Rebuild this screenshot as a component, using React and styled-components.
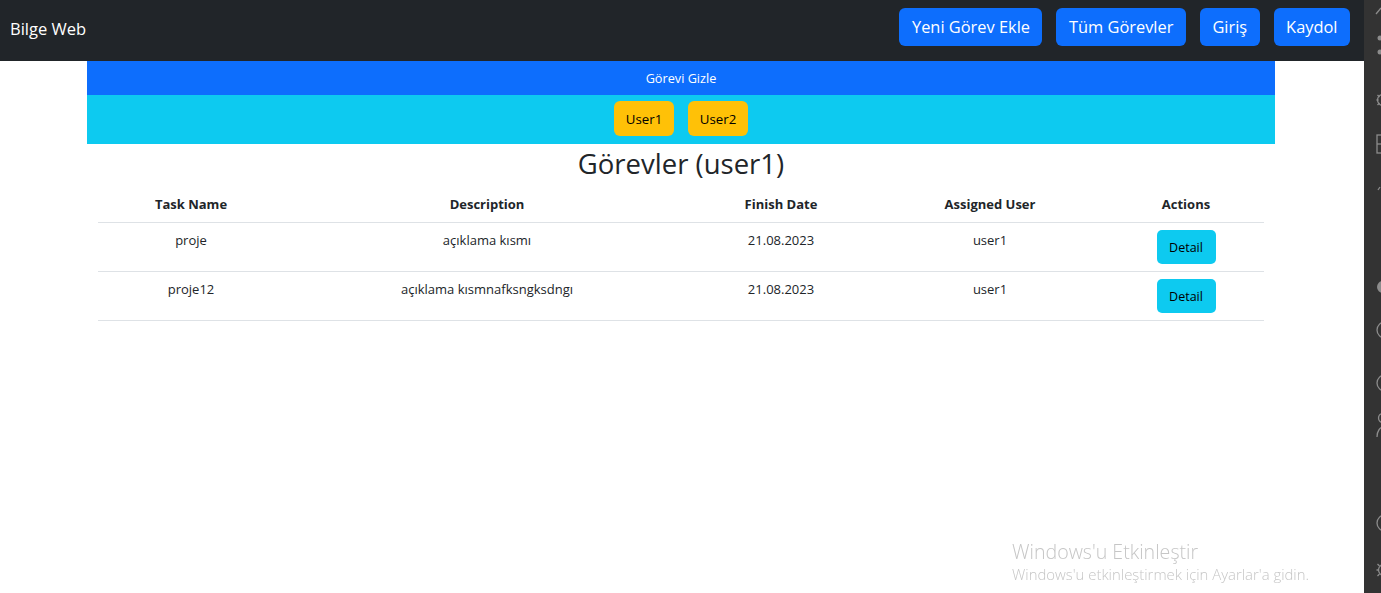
import React, { useState } from "react";
import styled, { createGlobalStyle } from "styled-components";

const GlobalStyle = createGlobalStyle`
  html, body {
    margin: 0;
    padding: 0;
    background: #fff;
    font-family: "Open Sans", "Liberation Sans", sans-serif;
    color: #212529;
  }
  * { box-sizing: border-box; }
`;

const Shell = styled.div`
  display: flex;
  min-height: 100vh;
`;

const Main = styled.div`
  flex: 1;
  min-width: 0;
`;

const Navbar = styled.nav`
  height: 61px;
  background: #212529;
  display: flex;
  align-items: center;
  justify-content: space-between;
  padding: 0 14px 0 10px;
`;

const Brand = styled.a`
  color: #fff;
  font-size: 16.5px;
  text-decoration: none;
  margin-top: -5px;
`;

const NavLinks = styled.div`
  display: flex;
  gap: 14px;
  margin-top: -8px;
`;

const NavButton = styled.button`
  height: 38px;
  padding: 0 12.5px;
  border: none;
  border-radius: 6px;
  background: #0d6efd;
  color: #fff;
  font-family: inherit;
  font-size: 16.4px;
  cursor: pointer;
`;

const Container = styled.div`
  width: 1188px;
  margin: 0 89px 0 87px;
`;

const ToggleBar = styled.div`
  height: 34px;
  background: #0d6efd;
  color: #fff;
  font-size: 12.7px;
  display: flex;
  align-items: center;
  justify-content: center;
  cursor: pointer;
`;

const UserBar = styled.div`
  height: 49px;
  background: #0dcaf0;
  display: flex;
  align-items: center;
  justify-content: center;
  gap: 14px;
  padding-bottom: 2px;
`;

const UserButton = styled.button`
  width: 60px;
  height: 35px;
  border: none;
  border-radius: 6px;
  background: #ffc107;
  color: #000;
  font-family: inherit;
  font-size: 13.3px;
  padding: 0;
  cursor: pointer;
`;

const Title = styled.h2`
  margin: 3px 0 3px;
  font-size: 27.5px;
  font-weight: 500;
  line-height: 34px;
  text-align: center;
`;

const Table = styled.table`
  width: 1166px;
  margin: 0 11px;
  border-collapse: collapse;
  table-layout: fixed;
  font-size: 13px;
  vertical-align: top;
`;

const Th = styled.th`
  width: ${(p) => p.$w}px;
  padding: 9.5px 8px 7.5px;
  line-height: 21px;
  font-weight: 700;
  text-align: center;
  border-bottom: 1px solid #dee2e6;
`;

const Td = styled.td`
  padding: 7px 8px;
  line-height: 21px;
  text-align: center;
  vertical-align: top;
  border-bottom: 1px solid #dee2e6;
`;

const DetailButton = styled.button`
  width: 59px;
  height: 34px;
  border: none;
  border-radius: 5px;
  background: #0dcaf0;
  color: #000;
  font-family: inherit;
  font-size: 12.5px;
  padding: 0;
  cursor: pointer;
`;

const Sidebar = styled.aside`
  width: 17px;
  flex-shrink: 0;
  background: #333333;
  overflow: hidden;
`;

const Watermark = styled.div`
  position: fixed;
  left: 1012px;
  top: 539px;
  color: #c6c6c6;
  font-weight: 300;
  pointer-events: none;
`;

const WatermarkTitle = styled.div`
  font-size: 19.6px;
  line-height: 26px;
`;

const WatermarkText = styled.div`
  font-size: 14.9px;
  line-height: 19px;
`;

const columns = [
  { key: "name", label: "Task Name", w: 186 },
  { key: "desc", label: "Description", w: 406 },
  { key: "date", label: "Finish Date", w: 182 },
  { key: "user", label: "Assigned User", w: 236 },
  { key: "actions", label: "Actions", w: 156 },
];

const tasks = [
  { id: 1, name: "proje", desc: "açıklama kısmı", date: "21.08.2023", user: "user1" },
  { id: 2, name: "proje12", desc: "açıklama kısmnafksngksdngı", date: "21.08.2023", user: "user1" },
];

const SideIcons = () => (
  <svg width="17" height="593" viewBox="0 0 17 593" fill="none" stroke="#8c8c8c" strokeWidth="1.3">
    <path d="M12 14 L17 8" />
    <circle cx="16" cy="38" r="2.5" fill="#8c8c8c" stroke="none" />
    <circle cx="16" cy="52" r="2.5" fill="#8c8c8c" stroke="none" />
    <circle cx="19" cy="100" r="5.5" />
    <path d="M12.5 100 h2 M13.5 95 l2 2 M13.5 105 l2 -2" />
    <rect x="13" y="135" width="9" height="18" />
    <path d="M13 144 h9" />
    <path d="M14 190 l2 -3" />
    <circle cx="19" cy="287" r="6" fill="#8c8c8c" stroke="none" />
    <circle cx="21" cy="330" r="8" />
    <circle cx="21" cy="383" r="8" />
    <circle cx="19" cy="418" r="4.5" />
    <path d="M13 437 c0 -6 3 -10 7 -10" />
    <circle cx="21" cy="523" r="8" />
    <circle cx="20" cy="570" r="5.5" />
    <path d="M12.5 570 h2 M13.5 564 l2 2 M13.5 576 l2 -2" />
  </svg>
);

const App = () => {
  const [visible, setVisible] = useState(true);
  const [user, setUser] = useState("user1");

  const shown = tasks.filter((t) => t.user === user);

  return (
    <>
      <GlobalStyle />
      <Shell>
        <Main>
          <Navbar>
            <Brand href="#">Bilge Web</Brand>
            <NavLinks>
              <NavButton>Yeni Görev Ekle</NavButton>
              <NavButton>Tüm Görevler</NavButton>
              <NavButton>Giriş</NavButton>
              <NavButton>Kaydol</NavButton>
            </NavLinks>
          </Navbar>
          <Container>
            <ToggleBar onClick={() => setVisible(!visible)}>
              {visible ? "Görevi Gizle" : "Görevi Göster"}
            </ToggleBar>
            {visible && (
              <>
                <UserBar>
                  <UserButton onClick={() => setUser("user1")}>User1</UserButton>
                  <UserButton onClick={() => setUser("user2")}>User2</UserButton>
                </UserBar>
                <Title>Görevler ({user})</Title>
                <Table>
                  <thead>
                    <tr>
                      {columns.map((c) => (
                        <Th key={c.key} $w={c.w}>
                          {c.label}
                        </Th>
                      ))}
                    </tr>
                  </thead>
                  <tbody>
                    {shown.map((t) => (
                      <tr key={t.id}>
                        <Td>{t.name}</Td>
                        <Td>{t.desc}</Td>
                        <Td>{t.date}</Td>
                        <Td>{t.user}</Td>
                        <Td>
                          <DetailButton>Detail</DetailButton>
                        </Td>
                      </tr>
                    ))}
                  </tbody>
                </Table>
              </>
            )}
          </Container>
        </Main>
        <Sidebar>
          <SideIcons />
        </Sidebar>
      </Shell>
      <Watermark>
        <WatermarkTitle>Windows'u Etkinleştir</WatermarkTitle>
        <WatermarkText>Windows'u etkinleştirmek için Ayarlar'a gidin.</WatermarkText>
      </Watermark>
    </>
  );
};

export default App;
